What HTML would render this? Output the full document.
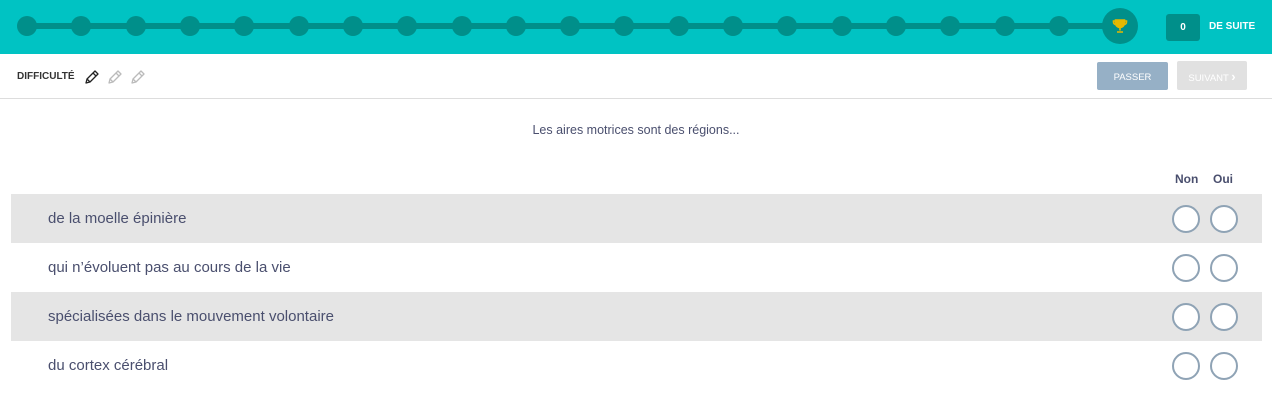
<!DOCTYPE html>
<html><head><meta charset="utf-8"><style>
*{margin:0;padding:0;box-sizing:border-box}
body{width:1272px;height:420px;background:#fff;font-family:"Liberation Sans",sans-serif;position:relative;overflow:hidden;color:#4a4f6e}
.hdr{position:absolute;left:0;top:0;width:1272px;height:54px;background:#00c3c3}
.line{position:absolute;left:27px;top:23px;width:1093px;height:6px;background:#008f8a}
.dot{position:absolute;top:16px;width:20px;height:20px;border-radius:50%;background:#008f8a}
.troph{position:absolute;left:1102px;top:8px;width:36px;height:36px;border-radius:50%;background:#008f8a}
.cnt{position:absolute;left:1166px;top:14px;width:34px;height:27px;border-radius:3px;background:#008f8a;color:#fff;font-size:10px;font-weight:bold;text-align:center;line-height:27px}
.ds{position:absolute;left:1209px;top:21px;color:#fff;font-size:10px;font-weight:bold}
.diff{position:absolute;left:17px;top:71px;font-size:10px;font-weight:bold;color:#333}
.sep{position:absolute;left:0;top:98px;width:1272px;height:1px;background:#ddd}
.btn{position:absolute;top:62px;height:28px;border-radius:2px;color:#fff;font-size:9.5px;text-align:center}
.btn span{position:absolute;left:0;right:0;top:9px;line-height:11px}
.q{position:absolute;left:0;width:1272px;top:123px;text-align:center;font-size:12.5px}
.hd{position:absolute;top:172px;font-size:12px;font-weight:bold;color:#4a4f6e}
.row{position:absolute;left:11px;width:1251px;height:49px}
.row span{position:absolute;left:37px;top:16px;font-size:15px}
.r{position:absolute;top:11px;width:28px;height:28px;border-radius:50%;border:2px solid #8fa3b5;background:#fff}
</style></head><body>
<div class="hdr">
<div class="line"></div>
<div class="dot" style="left:17px"></div><div class="dot" style="left:71px"></div><div class="dot" style="left:126px"></div><div class="dot" style="left:180px"></div><div class="dot" style="left:234px"></div><div class="dot" style="left:289px"></div><div class="dot" style="left:343px"></div><div class="dot" style="left:397px"></div><div class="dot" style="left:452px"></div><div class="dot" style="left:506px"></div><div class="dot" style="left:560px"></div><div class="dot" style="left:614px"></div><div class="dot" style="left:669px"></div><div class="dot" style="left:723px"></div><div class="dot" style="left:777px"></div><div class="dot" style="left:832px"></div><div class="dot" style="left:886px"></div><div class="dot" style="left:940px"></div><div class="dot" style="left:995px"></div><div class="dot" style="left:1049px"></div>
<div class="troph"><svg width="36" height="36" viewBox="0 0 36 36"><g fill="none" stroke="#e6b800" stroke-width="1.6"><path d="M13.5 12h9v3a4.5 4.5 0 0 1-9 0z" fill="#e6b800"/><path d="M13.5 13h-2v1a2.5 2.5 0 0 0 2.5 2.5M22.5 13h2v1a2.5 2.5 0 0 1-2.5 2.5"/><path d="M18 19.5v3M15 24h6"/></g></svg></div>
<div class="cnt">0</div>
<div class="ds">DE SUITE</div>
</div>
<div class="diff">DIFFICULTÉ</div>
<svg style="position:absolute;left:84px;top:68px" width="66" height="18" viewBox="0 0 66 18">
<g fill="none" stroke-width="1.3" stroke-linejoin="round">
<path d="M2 15l1-4 8-8 3 3-8 8z M9 5l3 3 M3 11l3 3" stroke="#222"/>
<path d="M25 15l1-4 8-8 3 3-8 8z M32 5l3 3 M26 11l3 3" stroke="#bbb"/>
<path d="M48 15l1-4 8-8 3 3-8 8z M55 5l3 3 M49 11l3 3" stroke="#bbb"/>
</g></svg>
<div class="btn" style="left:1097px;width:71px;background:#96b0c6"><span style="top:10px">PASSER</span></div>
<div class="btn" style="left:1177px;width:70px;background:#e1e1e1;top:61px;height:29px"><span style="top:10px">SUIVANT <b style="font-size:13px;line-height:11px;display:inline-block;height:11px">&#x203A;</b></span></div>
<div class="sep"></div>
<div class="q">Les aires motrices sont des régions...</div>
<div class="hd" style="left:1175px">Non</div>
<div class="hd" style="left:1213px">Oui</div>
<div class="row" style="top:194px;background:#e5e5e5"><span>de la moelle épinière</span><div class="r" style="left:1161px"></div><div class="r" style="left:1199px"></div></div>
<div class="row" style="top:243px"><span>qui n’évoluent pas au cours de la vie</span><div class="r" style="left:1161px"></div><div class="r" style="left:1199px"></div></div>
<div class="row" style="top:292px;background:#e5e5e5"><span>spécialisées dans le mouvement volontaire</span><div class="r" style="left:1161px"></div><div class="r" style="left:1199px"></div></div>
<div class="row" style="top:341px"><span>du cortex cérébral</span><div class="r" style="left:1161px"></div><div class="r" style="left:1199px"></div></div>
</body></html>
